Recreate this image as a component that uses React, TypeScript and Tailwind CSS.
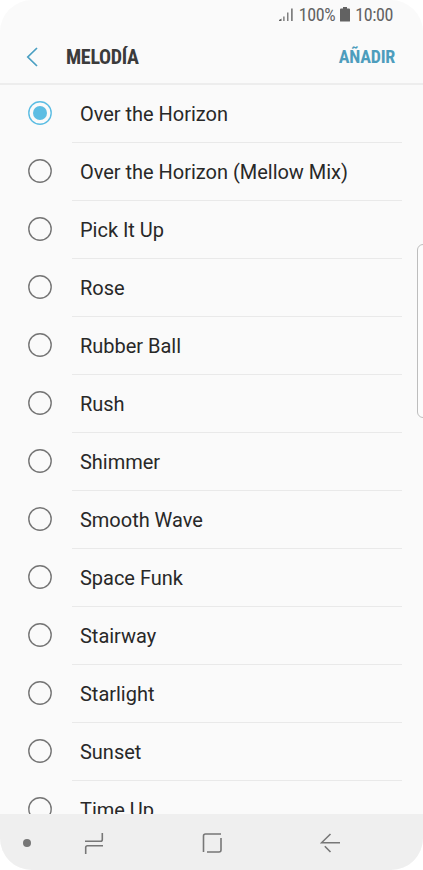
import { useState } from "react"

const MELODIES = [
  "Over the Horizon",
  "Over the Horizon (Mellow Mix)",
  "Pick It Up",
  "Rose",
  "Rubber Ball",
  "Rush",
  "Shimmer",
  "Smooth Wave",
  "Space Funk",
  "Stairway",
  "Starlight",
  "Sunset",
  "Time Up",
]

const StatusBar = () => (
  <div className="flex h-7 shrink-0 items-center justify-end pt-0.5 pr-[30px] text-[18px] leading-none tracking-[-0.4px] text-[#626262] [font-family:'Roboto_Condensed',Roboto,sans-serif] [font-stretch:75%]">
    <svg className="mr-[5px] mb-0.5 h-[14px] w-[15px]" viewBox="0 0 15 14" fill="currentColor">
      <path d="M0 14v-1L2.5 11.5V14zM4.3 9.5h1.2V14H4.3zM8.2 5.5h1.2V14H8.2zM12.2 1.5h1.4V14h-1.4z" />
    </svg>
    <span>100%</span>
    <svg className="mx-[5px] mb-0.5 h-[15px] w-[10px]" viewBox="0 0 10 15" fill="currentColor">
      <path d="M3 0h4v1.5h2a1 1 0 0 1 1 1V14a.5.5 0 0 1-.5.5h-9A.5.5 0 0 1 0 14V2.5a1 1 0 0 1 1-1h2z" />
    </svg>
    <span>10:00</span>
  </div>
)

const Header = () => (
  <header className="flex h-[57px] shrink-0 items-center border-b-2 border-[#ededed] pt-0.5 pr-7 pl-[26px] font-bold [font-family:'Roboto_Condensed',Roboto,sans-serif] [font-stretch:75%]">
    <button type="button" aria-label="Atrás">
      <svg className="h-5 w-3" viewBox="0 0 12 20" fill="none" stroke="#4a9fc2" strokeWidth="1.7">
        <path d="M11 1L1.8 10L11 19" />
      </svg>
    </button>
    <h1 className="ml-7 pt-px text-[20px] leading-none tracking-[-0.3px] text-[#3b3b3b]">MELODÍA</h1>
    <button type="button" className="ml-auto pt-px text-[18px] leading-none tracking-[-0.25px] text-[#4d9dbd]">
      AÑADIR
    </button>
  </header>
)

interface MelodyRowProps {
  name: string
  checked: boolean
  onSelect: () => void
}

const MelodyRow = ({ name, checked, onSelect }: MelodyRowProps) => (
  <li>
    <button
      type="button"
      role="radio"
      aria-checked={checked}
      onClick={onSelect}
      className="flex h-[58px] w-full items-center pr-[21px] pl-7 text-left"
    >
      <svg className="mb-0.5 h-6 w-6 shrink-0" viewBox="0 0 24 24">
        <circle cx="12" cy="12" r="11.2" fill="none" stroke={checked ? "#5cbde3" : "#757575"} strokeWidth="1.4" />
        {checked && <circle cx="12" cy="12" r="7" fill="#5cbde3" />}
      </svg>
      <span className="ml-5 flex h-full grow items-center border-b border-[#e9e9e9] pl-2 text-[20px] tracking-[-0.02px] text-[#282828]">
        {name}
      </span>
    </button>
  </li>
)

const NavigationBar = () => (
  <nav className="flex h-14 shrink-0 items-center bg-[#efefef] pt-0.5 text-[#777777]">
    <span className="ml-[23px] h-2 w-2 rounded-full bg-[#777777]" />
    <svg className="ml-[53px] h-[22px] w-5" viewBox="0 0 20 22" fill="none" stroke="currentColor" strokeWidth="1.6">
      <path d="M1 9.3h15.5q1.8 0 1.8-1.8V1M19 13.8H3.5q-1.8 0-1.8 1.8V22" />
    </svg>
    <svg className="ml-[98px] h-5 w-5" viewBox="0 0 20 20" fill="none" stroke="currentColor" strokeWidth="1.6">
      <path d="M1.5 19V3q0-2 2-2H19M5 19h12q2 0 2-2V5" />
    </svg>
    <svg className="ml-[98px] h-5 w-5" viewBox="0 0 20 20" fill="none" stroke="currentColor" strokeWidth="1.6">
      <path d="M10.5 1L1.5 9.8H20M4.8 13.2L10.5 19" />
    </svg>
  </nav>
)

export default function App() {
  const [selected, setSelected] = useState("Over the Horizon")

  return (
    <div className="h-[870px] w-[423px] overflow-hidden bg-white font-[Roboto,sans-serif]">
      <main className="relative flex h-[869.5px] flex-col overflow-hidden rounded-[32px] bg-[#fafafa]">
        <StatusBar />
        <Header />
        <ul role="radiogroup" className="min-h-0 grow overflow-hidden">
          {MELODIES.map((name) => (
            <MelodyRow key={name} name={name} checked={name === selected} onSelect={() => setSelected(name)} />
          ))}
        </ul>
        <NavigationBar />
        {/* edge panel handle */}
        <div className="absolute top-[244px] -right-1 h-[174px] w-2.5 rounded-l-md border border-[#bdbdbd] bg-[#fcfcfc]" />
      </main>
    </div>
  )
}
